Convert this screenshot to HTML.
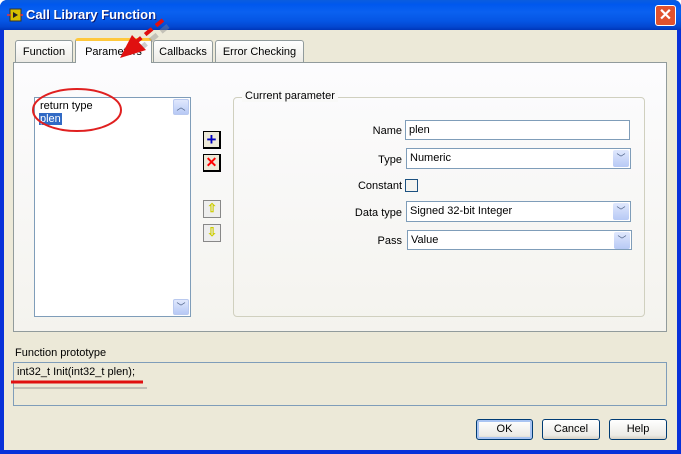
<!DOCTYPE html><html><head><style>
*{margin:0;padding:0;box-sizing:border-box}
body{width:681px;height:454px;overflow:hidden;font-family:Tahoma,"Liberation Sans",sans-serif;font-size:11px;color:#000;background:#fff}
.win{position:absolute;left:0;top:0;width:681px;height:454px;background:#0831d9;border-radius:7px 7px 0 0}
.title{position:absolute;left:0;top:0;width:681px;height:30px;border-radius:7px 7px 0 0;background:linear-gradient(#0a5ddf,#0058ee 15%,#0a61f0 40%,#0555e4 70%,#0346cf 90%,#0036b8)}
.title span{position:absolute;left:26px;top:7px;color:#fff;font-weight:bold;font-size:13px;text-shadow:1px 1px #0a1870}
.body{position:absolute;left:4px;top:30px;width:673px;height:420px;background:#ece9d8}
.abs{position:absolute}
.tab{position:absolute;top:40px;height:22px;border:1px solid #919b9c;border-bottom:none;background:linear-gradient(#fff,#ecebe5);border-radius:3px 3px 0 0;padding:5px 0 0;text-align:center}
.panel{position:absolute;left:13px;top:62px;width:654px;height:270px;border:1px solid #919b9c;background:linear-gradient(#fcfcfe,#f4f3ee)}
.inp{position:absolute;background:#fff;border:1px solid #7f9db9;padding:3px 3px}
.dd{position:absolute;right:1px;top:1px;width:16px;height:17px;background:linear-gradient(#e0e8fd,#b7c9f5);border-radius:2px;color:#4d6185;font-size:9px;text-align:center;line-height:17px}
.lbl{position:absolute;text-align:right}
.sb{position:absolute;width:16px;height:16px;background:linear-gradient(#e0e8fd,#b7c9f5);border:1px solid #b9c9ef;border-radius:2px;color:#4d6185;font-size:9px;text-align:center;line-height:14px}
.tb{position:absolute;left:203px;width:18px;height:18px;border:1px solid #000;border-right-width:2px;border-bottom-width:2px;background:#ece9d8;text-align:center;font-weight:bold;line-height:15px}
.btn{position:absolute;top:419px;height:21px;border:1px solid #003c74;border-radius:3px;background:linear-gradient(#fff,#ecebe6 80%,#d6d0c5);text-align:center;line-height:19px}
</style></head><body>
<div class="win"></div>
<div class="title"><svg class="abs" style="left:7px;top:8px" width="16" height="14"><rect x="3" y="1" width="11" height="12" fill="#d8c000" stroke="#333"/><path d="M6 4l5 3-5 3z" fill="#222"/><path d="M0 7h4M13 7h3" stroke="#e33" stroke-width="1.5"/></svg><span>Call Library Function</span>
<div class="abs" style="left:655px;top:5px;width:21px;height:21px;background:#e0522e;border:1px solid #fff;border-radius:3px;color:#fff;font-weight:bold;font-size:16px;text-align:center;line-height:19px">✕</div></div>
<div class="body"></div>
<div class="panel"></div>
<div class="tab" style="left:15px;width:58px">Function</div>
<div class="tab" style="left:75px;top:38px;height:25px;width:77px;background:#fcfcfe;border-top:3px solid #ffc83c">Parameters</div>
<div class="tab" style="left:153px;width:60px">Callbacks</div>
<div class="tab" style="left:215px;width:89px">Error Checking</div>
<div class="abs" style="left:34px;top:97px;width:157px;height:220px;background:#fff;border:1px solid #7f9db9">
<div class="abs" style="left:5px;top:2px">return type</div>
<div class="abs" style="left:4px;top:15px;background:#316ac5;color:#fff;padding:0 1px">plen</div>
<div class="sb" style="left:138px;top:1px">︿</div>
<div class="sb" style="left:138px;top:201px">﹀</div></div>
<div class="tb" style="top:131px;color:#0000c0;font-size:17px">+</div>
<div class="tb" style="top:154px;color:#f00;font-size:14px">✕</div>
<div class="tb" style="top:200px;border:1px solid #888;color:#cc0;font-size:12px;background:#eee">⇧</div>
<div class="tb" style="top:224px;border:1px solid #888;color:#cc0;font-size:12px;background:#eee">⇩</div>
<div class="abs" style="left:233px;top:97px;width:412px;height:220px;border:1px solid #d0d0bf;border-radius:4px"></div>
<div class="abs" style="left:242px;top:90px;background:#f9f9f8;padding:0 3px">Current parameter</div>
<div class="lbl" style="left:300px;width:102px;top:125px">Name</div>
<div class="inp" style="left:405px;top:120px;width:225px;height:20px">plen</div>
<div class="lbl" style="left:300px;width:102px;top:154px">Type</div>
<div class="inp" style="left:406px;top:148px;width:225px;height:21px">Numeric<div class="dd">﹀</div></div>
<div class="lbl" style="left:300px;width:102px;top:180px">Constant</div>
<div class="abs" style="left:405px;top:179px;width:13px;height:13px;border:1px solid #1c5180;background:#f4f4f0"></div>
<div class="lbl" style="left:300px;width:102px;top:207px">Data type</div>
<div class="inp" style="left:406px;top:201px;width:225px;height:21px">Signed 32-bit Integer<div class="dd">﹀</div></div>
<div class="lbl" style="left:300px;width:102px;top:235px">Pass</div>
<div class="inp" style="left:407px;top:230px;width:225px;height:20px">Value<div class="dd">﹀</div></div>
<div class="abs" style="left:15px;top:347px">Function prototype</div>
<div class="abs" style="left:13px;top:362px;width:654px;height:44px;border:1px solid #7f9db9;background:#ece9d8;padding:3px 3px">int32_t Init(int32_t plen);</div>
<div class="btn" style="left:476px;width:57px;border-color:#003c74;box-shadow:inset 0 0 0 2px #a9c4f2">OK</div>
<div class="btn" style="left:542px;width:58px">Cancel</div>
<div class="btn" style="left:609px;width:58px">Help</div>
<svg class="abs" style="left:0;top:0" width="681" height="454">
<ellipse cx="77" cy="110" rx="44" ry="21" fill="none" stroke="#e02020" stroke-width="2"/>
<path d="M165 22 L138 44" stroke="#888" stroke-width="5" stroke-dasharray="9 5" opacity=".4" transform="translate(3,4)"/>
<path d="M163 20 L136 42" stroke="#e01010" stroke-width="4" stroke-dasharray="9 5"/>
<path d="M120 58 L132 35 L146 50 Z" fill="#e01010"/>
<path d="M11 382 H143" stroke="#e01010" stroke-width="3"/>
<path d="M14 388 H147" stroke="#999" stroke-width="2" opacity=".5"/>
</svg>
</body></html>
